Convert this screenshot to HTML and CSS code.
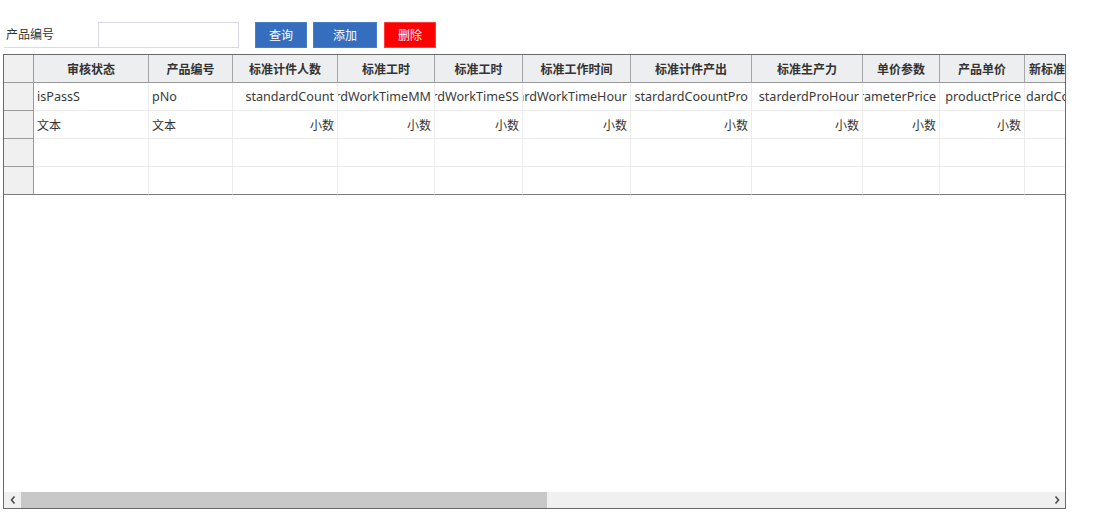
FILE: index.html
```html
<!DOCTYPE html>
<html lang="zh">
<head>
<meta charset="utf-8">
<title>产品</title>
<link rel="stylesheet" href="styles.css">
</head>
<body>
<div class="toolbar">
  <label class="field-label">产品编号</label>
  <input class="field-input" type="text">
  <button class="btn btn-blue btn-query">查询</button>
  <button class="btn btn-blue btn-add">添加</button>
  <button class="btn btn-red">删除</button>
</div>
<div class="grid">
  <div class="viewport">
    <div class="table">
      <div class="row head">
        <div class="rh"></div>
        <div class="c c1">审核状态</div>
        <div class="c c2">产品编号</div>
        <div class="c c3">标准计件人数</div>
        <div class="c c4">标准工时</div>
        <div class="c c5">标准工时</div>
        <div class="c c6">标准工作时间</div>
        <div class="c c7">标准计件产出</div>
        <div class="c c8">标准生产力</div>
        <div class="c c9">单价参数</div>
        <div class="c c10">产品单价</div>
        <div class="c c11">新标准计件产出</div>
      </div>
      <div class="row fields">
        <div class="rh"></div>
        <div class="c c1 l"><span>isPassS</span></div>
        <div class="c c2 l"><span>pNo</span></div>
        <div class="c c3 r"><span>standardCount</span></div>
        <div class="c c4 r"><span>standardWorkTimeMM</span></div>
        <div class="c c5 r"><span>standardWorkTimeSS</span></div>
        <div class="c c6 r"><span>standardWorkTimeHour</span></div>
        <div class="c c7 r"><span>stardardCoountPro</span></div>
        <div class="c c8 r"><span>starderdProHour</span></div>
        <div class="c c9 r"><span>parameterPrice</span></div>
        <div class="c c10 r"><span>productPrice</span></div>
        <div class="c c11 l"><span>dardCountProNew</span></div>
      </div>
      <div class="row">
        <div class="rh"></div>
        <div class="c c1 l"><span>文本</span></div>
        <div class="c c2 l"><span>文本</span></div>
        <div class="c c3 r"><span>小数</span></div>
        <div class="c c4 r"><span>小数</span></div>
        <div class="c c5 r"><span>小数</span></div>
        <div class="c c6 r"><span>小数</span></div>
        <div class="c c7 r"><span>小数</span></div>
        <div class="c c8 r"><span>小数</span></div>
        <div class="c c9 r"><span>小数</span></div>
        <div class="c c10 r"><span>小数</span></div>
        <div class="c c11 r"><span></span></div>
      </div>
      <div class="row">
        <div class="rh"></div>
        <div class="c c1"></div><div class="c c2"></div><div class="c c3"></div><div class="c c4"></div><div class="c c5"></div><div class="c c6"></div><div class="c c7"></div><div class="c c8"></div><div class="c c9"></div><div class="c c10"></div><div class="c c11"></div>
      </div>
      <div class="row last">
        <div class="rh"></div>
        <div class="c c1"></div><div class="c c2"></div><div class="c c3"></div><div class="c c4"></div><div class="c c5"></div><div class="c c6"></div><div class="c c7"></div><div class="c c8"></div><div class="c c9"></div><div class="c c10"></div><div class="c c11"></div>
      </div>
    </div>
  </div>
  <div class="hscroll">
    <div class="arrow">
      <svg width="6" height="8" viewBox="0 0 6 8"><path d="M4.5 0.5 L1.5 4 L4.5 7.5" fill="none" stroke="#4d4d4d" stroke-width="1.6"/></svg>
    </div>
    <div class="track">
      <div class="thumb"></div>
    </div>
    <div class="arrow">
      <svg width="6" height="8" viewBox="0 0 6 8"><path d="M1.5 0.5 L4.5 4 L1.5 7.5" fill="none" stroke="#4d4d4d" stroke-width="1.6"/></svg>
    </div>
  </div>
</div>
</body>
</html>
```
FILE: styles.css
```css
* { box-sizing: border-box; }
html, body { margin: 0; padding: 0; background: #fff; }
body {
  font-family: "Noto Sans", "Noto Sans CJK SC", sans-serif;
  font-size: 12px;
  color: #333;
}
.toolbar {
  display: flex;
  align-items: flex-start;
  padding: 22px 0 0 4px;
  height: 54px;
}
.field-label {
  width: 94px;
  height: 26px;
  border-bottom: 1px solid #d9d9ec;
  padding: 4px 0 0 2px;
  line-height: 16px;
  font-family: "Noto Sans CJK SC", sans-serif;
  color: #333;
}
.field-input {
  width: 141px;
  height: 26px;
  margin: 0;
  border: 1px solid #d8d8ea;
  padding: 0 4px;
  outline: none;
  font: inherit;
}
.btn {
  height: 26px;
  margin: 0;
  padding: 0;
  border: 1px solid transparent;
  font-family: "Noto Sans CJK SC", sans-serif;
  font-size: 12px;
  color: #fff;
  line-height: 24px;
}
.btn-blue { background: #356ebe; border-color: #4a7fc8; }
.btn-query { width: 52px; margin-left: 16px; }
.btn-add { width: 64px; margin-left: 6px; }
.btn-red { width: 52px; margin-left: 7px; background: #ff0000; border-color: #ff3b3b; }

.grid {
  margin-left: 3px;
  width: 1063px;
  height: 455px;
  border: 1px solid #6a6a6a;
  display: flex;
  flex-direction: column;
}
.viewport {
  flex: 1;
  overflow: hidden;
}
.table { width: max-content; }
.row {
  display: flex;
  height: 28px;
}
.rh {
  width: 30px;
  flex: none;
  background: #f0f0f0;
  border-right: 1px solid #999;
  border-bottom: 1px solid #9a9a9a;
}
.c {
  flex: none;
  height: 28px;
  border-right: 1px solid #ececec;
  border-bottom: 1px solid #ececec;
  display: flex;
  align-items: center;
  overflow: hidden;
  white-space: nowrap;
  color: #333;
}
.c span { flex: none; }
.c.l { justify-content: flex-start; padding-left: 3px; }
.c.r { justify-content: flex-end; padding-right: 3px; }
.fields .c { font-size: 12.6px; color: #3a3a3a; }
.head .c {
  background: #eceef0;
  border-right: 1px solid #a6a6a6;
  border-bottom: 1px solid #999;
  justify-content: center;
  font-family: "Noto Sans CJK SC", sans-serif;
  font-weight: bold;
  color: #333;
}
.head .c11 { justify-content: flex-start; padding-left: 4px; }
.head .rh { background: #f0f0f0; border-bottom-color: #999; }
.last .c, .last .rh { border-bottom: 1px solid #7a7a7a; }
.c1 { width: 115px; }
.c2 { width: 84px; }
.c3 { width: 105px; }
.c4 { width: 97px; }
.c5 { width: 88px; }
.c6 { width: 108px; }
.c7 { width: 121px; }
.c8 { width: 111px; }
.c9 { width: 77px; }
.c10 { width: 85px; }
.c11 { width: 120px; }
.c11.l { padding-left: 1px; }

.hscroll {
  height: 16px;
  display: flex;
  background: #f0f0f0;
}
.arrow {
  width: 17px;
  flex: none;
  display: flex;
  align-items: center;
  justify-content: center;
}
.track {
  flex: 1;
  display: flex;
}
.thumb {
  width: 526px;
  background: #c8c8c8;
}
```
